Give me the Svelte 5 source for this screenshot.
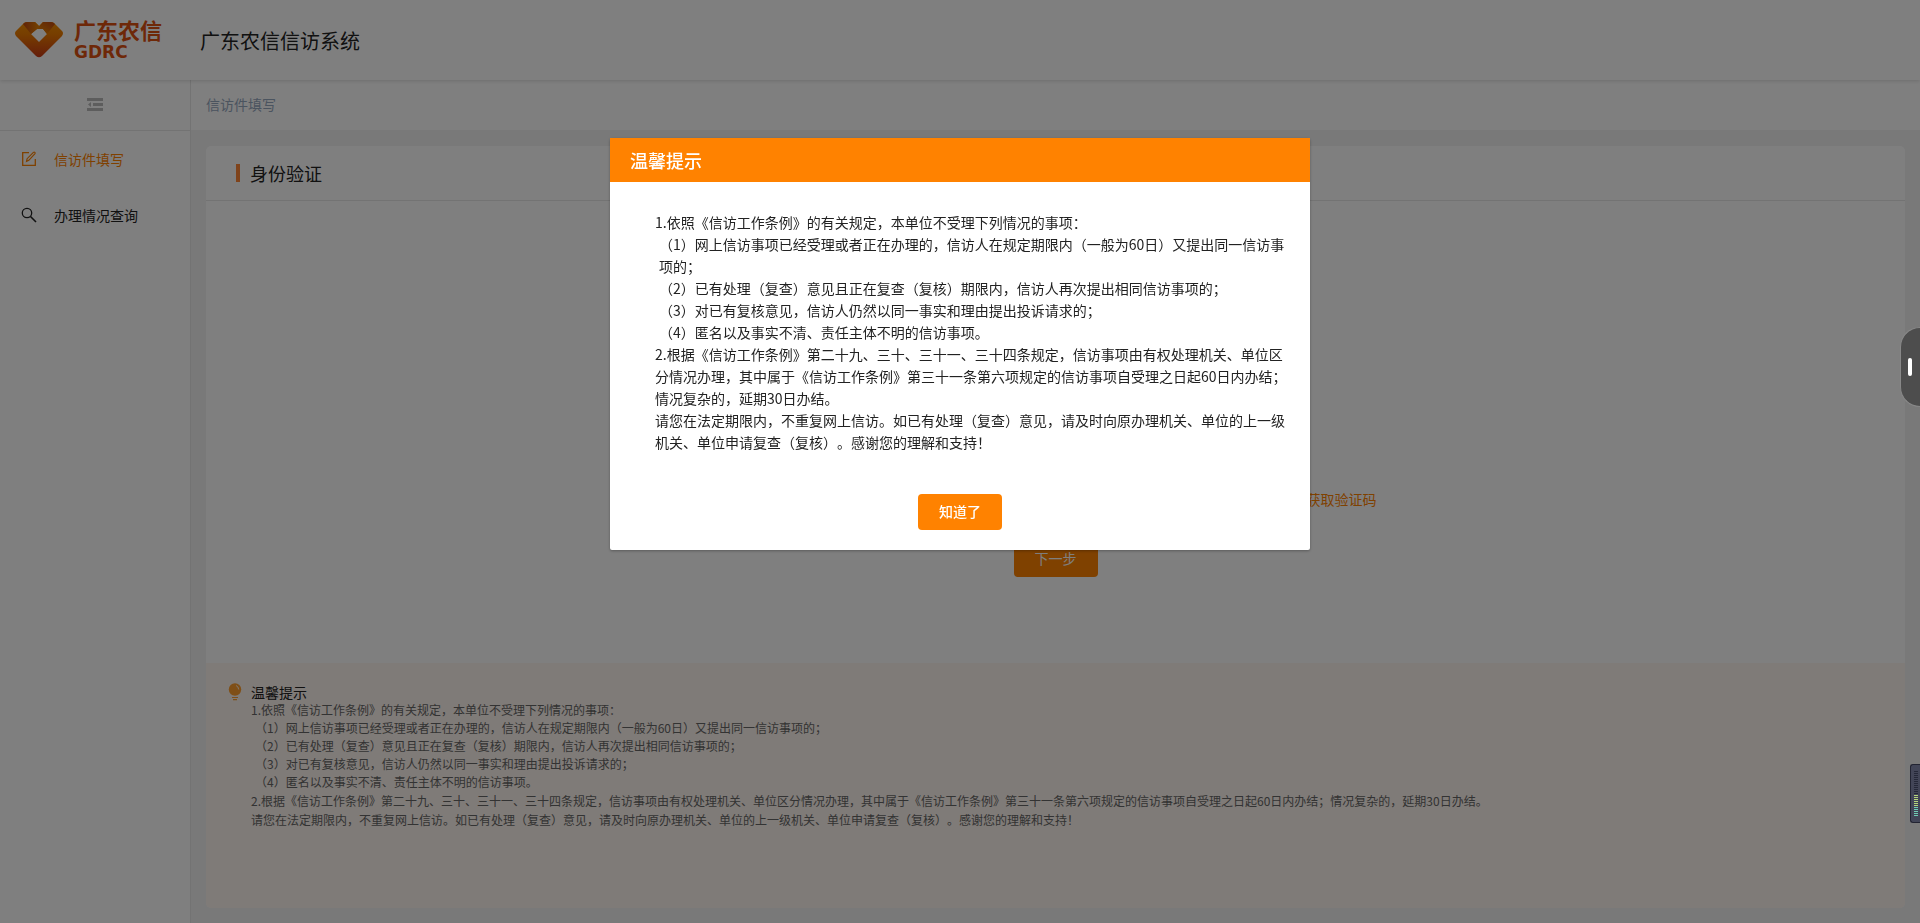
<script lang="ts">
	let open = $state(true);
	let collapsed = $state(false);

	const menu = [
		{ label: '信访件填写', icon: 'edit', active: true },
		{ label: '办理情况查询', icon: 'search', active: false }
	];

	const intro = '1.依照《信访工作条例》的有关规定，本单位不受理下列情况的事项：';
	const items = [
		'（1）网上信访事项已经受理或者正在办理的，信访人在规定期限内（一般为60日）又提出同一信访事项的；',
		'（2）已有处理（复查）意见且正在复查（复核）期限内，信访人再次提出相同信访事项的；',
		'（3）对已有复核意见，信访人仍然以同一事实和理由提出投诉请求的；',
		'（4）匿名以及事实不清、责任主体不明的信访事项。'
	];
	const rules = [
		'2.根据《信访工作条例》第二十九、三十、三十一、三十四条规定，信访事项由有权处理机关、单位区分情况办理，其中属于《信访工作条例》第三十一条第六项规定的信访事项自受理之日起60日内办结；情况复杂的，延期30日办结。',
		'请您在法定期限内，不重复网上信访。如已有处理（复查）意见，请及时向原办理机关、单位的上一级机关、单位申请复查（复核）。感谢您的理解和支持！'
	];
	const bars = Array.from({ length: 23 }, (_, i) => i);
</script>

<div class="app">
	<header class="top">
		<a class="logo" href="#home" aria-label="广东农信">
			<svg width="48" height="36" viewBox="0 0 48 36" aria-hidden="true">
				<defs>
					<linearGradient id="heart" x1="0" y1="0" x2="0" y2="1">
						<stop offset="0" stop-color="#f59200" />
						<stop offset="0.35" stop-color="#ee7c00" />
						<stop offset="1" stop-color="#c93a16" />
					</linearGradient>
					<linearGradient id="fold" x1="0" y1="0" x2="1" y2="0">
						<stop offset="0" stop-color="#c04410" />
						<stop offset="1" stop-color="#e88400" />
					</linearGradient>
					<linearGradient id="fold-right" x1="1" y1="0" x2="0" y2="1">
						<stop offset="0" stop-color="#c04410" />
						<stop offset="1" stop-color="#f09000" />
					</linearGradient>
				</defs>
				<path d="M9 1Q10 0 12 0H20L24 4L28 0H36Q38 0 39 1L47 9Q49 11 47 14L27 34Q24 36.500 21 34L1 14Q-1 11 1 9ZM22 7L16 12L24 20L32 12L28 7Z" fill="url(#heart)" fill-rule="evenodd" />
				<path d="M8 2Q10 0 12 0H20L24 4L22 7L16 12Z" fill="url(#fold)" />
				<path d="M40 2L32 12L28 7H22L28 0H36Q38 0 40 2Z" fill="url(#fold-right)" />
			</svg>
			<span class="brand"><b>广东农信</b><strong>GDRC</strong></span>
		</a>
		<h1>广东农信信访系统</h1>
	</header>

	<div class="body">
		<aside class:collapsed>
			<button class="toggle" aria-label="收起菜单" onclick={() => (collapsed = !collapsed)}>
				<svg width="16" height="13" viewBox="0 0 16 13" fill="#bbb" aria-hidden="true">
					<path d="M0 0h16v3H0zM6 5h10v3H6zM0 10h16v3H0zM4 4v5L1 6.500z" />
				</svg>
			</button>
			<nav>
				{#each menu as item}
					<a href="#{item.icon}" class:active={item.active}>
						{#if item.icon === 'edit'}
							<svg width="16" height="16" viewBox="0 0 16 16" fill="none" stroke="currentColor" aria-hidden="true">
								<path d="M8 1.700H1.700v12.600H14.300V8" stroke-width="1.300" />
								<path d="M5.500 10.500l.6-2.800L12.400 1.400q.7-.6 1.400 0t0 1.400L7.800 9.300z" stroke-width="1.200" />
							</svg>
						{:else}
							<svg width="16" height="16" viewBox="0 0 16 16" fill="none" stroke="currentColor" aria-hidden="true">
								<circle cx="6" cy="6" r="4.700" stroke-width="1.300" />
								<path d="M9.500 9.500L15 15" stroke-width="1.600" />
							</svg>
						{/if}
						<span>{item.label}</span>
					</a>
				{/each}
			</nav>
		</aside>

		<div class="content">
			<div class="crumb">信访件填写</div>
			<main>
				<section class="card">
					<h2>身份验证</h2>
					<div class="form">
						<button class="code">获取验证码</button>
						<button class="primary">下一步</button>
					</div>
					<div class="notice">
						<svg width="14" height="18" viewBox="0 0 14 18" aria-hidden="true">
							<circle cx="7" cy="6.500" r="6.200" fill="#ff9f2e" />
							<path d="M8 2.500Q10.500 3.500 10.700 6.500" fill="none" stroke="#fff0e0" />
							<path d="M4 14.500h6M5 16.700h4" stroke="#ff9f2e" stroke-width="1.200" />
						</svg>
						<div>
							<h3>温馨提示</h3>
							<p>{intro}</p>
							{#each items as text}<p class="sub">{text}</p>{/each}
							{#each rules as text}<p class="rule">{text}</p>{/each}
						</div>
					</div>
				</section>
			</main>
		</div>
	</div>
</div>

{#if open}
	<div class="mask">
		<div class="dialog" role="dialog" aria-modal="true" aria-labelledby="tip-title">
			<h2 id="tip-title">温馨提示</h2>
			<div class="text">
				<p>{intro}</p>
				{#each items as text}<p class="sub">{text}</p>{/each}
				{#each rules as text}<p>{text}</p>{/each}
			</div>
			<button class="primary confirm" onclick={() => (open = false)}>知道了</button>
		</div>
	</div>
{/if}

<button class="handle" aria-label="展开侧栏"><i></i></button>
<div class="meter" aria-hidden="true">
	{#each bars as n}<i class:low={n > 11} class:lower={n > 17}></i>{/each}
</div>

<style>
	:global(body) {
		font-family: 'Noto Sans CJK SC', sans-serif;
		font-size: 14px;
		color: #222;
		background: #f2f2f2;
		text-spacing-trim: space-all;
	}

	h1,
	h2,
	h3,
	p {
		margin: 0;
		font-weight: 400;
	}

	button {
		font: inherit;
		border: 0;
		padding: 0;
		cursor: pointer;
	}

	a {
		color: inherit;
		text-decoration: none;
	}

	.app {
		display: flex;
		flex-direction: column;
		min-height: 100vh;
	}

	.top {
		position: relative;
		display: flex;
		align-items: center;
		height: 80px;
		padding-left: 15px;
		background: #fff;
		box-shadow: 0 1px 4px rgba(0, 0, 0, 0.15);
	}

	.logo {
		display: flex;
		align-items: center;
		gap: 11px;
		width: 185px;
		color: #dc5010;
	}

	.brand {
		display: flex;
		flex-direction: column;
		gap: 2px;
	}

	.brand b {
		font-size: 22px;
		font-weight: 700;
		line-height: 22px;
	}

	.brand strong {
		font-family: 'DejaVu Sans', sans-serif;
		font-size: 17px;
		line-height: 20px;
	}

	h1 {
		font-size: 20px;
	}

	.body {
		display: flex;
		flex: 1;
	}

	aside {
		width: 190px;
		background: #fff;
		border-right: 1px solid #e6e6e6;
	}

	aside.collapsed {
		width: 54px;
		overflow: hidden;
	}

	.toggle {
		display: flex;
		align-items: center;
		justify-content: center;
		width: 100%;
		height: 51px;
		padding-bottom: 2px;
		background: #fff;
		border-bottom: 1px solid #e6e6e6;
	}

	nav a {
		display: flex;
		align-items: center;
		gap: 17px;
		height: 56px;
		padding-left: 21px;
		white-space: nowrap;
	}

	nav a.active,
	.code {
		color: #ff8200;
	}

	.content {
		display: flex;
		flex: 1;
		flex-direction: column;
		min-width: 0;
	}

	.crumb {
		height: 50px;
		padding-left: 15px;
		line-height: 48px;
		color: #97a8be;
		background: #fff;
	}

	main {
		display: flex;
		flex: 1;
		padding: 16px 15px 15px;
	}

	.card {
		display: flex;
		flex: 1;
		flex-direction: column;
		overflow: hidden;
		background: #fff;
		border-radius: 5px;
	}

	.card h2 {
		display: flex;
		align-items: center;
		gap: 10px;
		height: 54px;
		padding-left: 30px;
		font-size: 18px;
		border-bottom: 1px solid #e6e6e6;
	}

	.card h2::before {
		width: 4px;
		height: 18px;
		content: '';
		background: #ff8636;
	}

	.form {
		display: flex;
		flex: 1;
		flex-direction: column;
		align-items: center;
		justify-content: flex-end;
		gap: 32px;
		padding-bottom: 86px;
	}

	.code {
		margin-left: 572px;
		line-height: 20px;
		background: none;
	}

	.primary {
		width: 84px;
		height: 36px;
		padding-bottom: 2px;
		color: #fff;
		background: #ff8200;
		border-radius: 4px;
	}

	.confirm {
		font-weight: 500;
	}

	.notice {
		display: flex;
		gap: 9px;
		min-height: 205px;
		padding: 20px 22px;
		font-size: 12px;
		line-height: 18px;
		color: #666;
		background: #fff6f0;
	}

	h3 {
		font-size: 14px;
		color: #222;
	}

	.sub {
		padding-left: 4px;
	}

	.rule {
		line-height: 19px;
	}

	.mask {
		position: fixed;
		inset: 0;
		background: rgba(0, 0, 0, 0.5);
	}

	.dialog {
		display: flex;
		flex-direction: column;
		align-items: center;
		width: 700px;
		margin: 15vh auto 0;
		padding-bottom: 20px;
		background: #fff;
		border-radius: 2px;
		box-shadow: 0 1px 3px rgba(0, 0, 0, 0.3);
	}

	.dialog h2 {
		align-self: stretch;
		padding-left: 20px;
		font-size: 18px;
		font-weight: 500;
		line-height: 44px;
		color: #fff;
		background: #ff8200;
	}

	.text {
		padding: 29px 20px 41px 45px;
		line-height: 22px;
	}

	.handle {
		position: fixed;
		top: 327px;
		right: 0;
		width: 20px;
		height: 80px;
		background: #4d4d4d;
		border: 1px solid #888;
		border-right: 0;
		border-radius: 20px 0 0 20px;
	}

	.handle i {
		display: block;
		width: 4px;
		height: 18px;
		margin-left: 7px;
		background: #fff;
		border-radius: 2px;
	}

	.meter {
		position: fixed;
		top: 764px;
		right: 0;
		display: flex;
		flex-direction: column;
		gap: 1px;
		padding: 6px 2px 6px 3px;
		background: #424557;
		border: 1px solid #222432;
		border-right: 0;
		border-radius: 3px 0 0 3px;
	}

	.meter i {
		width: 4px;
		height: 1px;
		background: #252838;
	}

	.meter i.low {
		background: #b5d67c;
	}

	.meter i.lower {
		background: #70cdb4;
	}
</style>
